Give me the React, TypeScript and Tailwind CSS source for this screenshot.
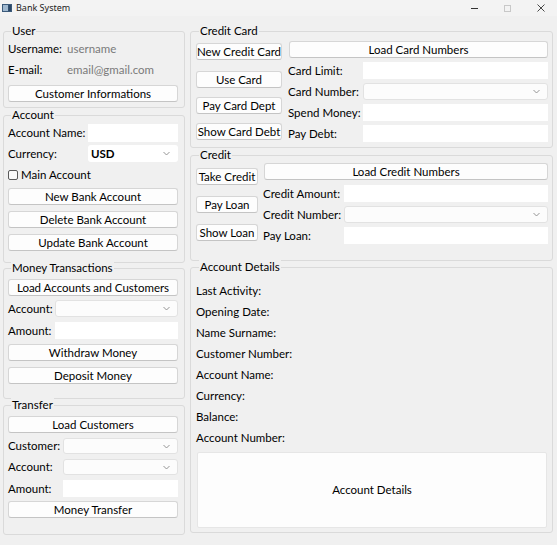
import React from "react";

const Btn = ({ children, className = "" }: { children: React.ReactNode; className?: string }) => (
  <div
    className={
      "flex items-center justify-center bg-[#fdfdfd] border border-[#d6d6d6] border-b-[#c4c4c4] rounded-[3px] text-black whitespace-nowrap " +
      className
    }
  >
    {children}
  </div>
);

const Input = ({ className = "" }: { className?: string }) => <div className={"bg-white " + className} />;

const Chevron = () => (
  <svg width="7" height="5" viewBox="0 0 7 5" className="shrink-0">
    <path d="M0.5 1 L3.5 4 L6.5 1" fill="none" stroke="#8a8a8a" strokeWidth="0.9" />
  </svg>
);

const Select = ({ className = "", value }: { className?: string; value?: string }) => (
  <div
    className={
      "flex items-center justify-between bg-[#fcfcfc] border border-[#e2e2e2] rounded-[3px] pl-[2px] pr-[7px] " + className
    }
  >
    <span className="font-bold">{value ?? ""}</span>
    <Chevron />
  </div>
);

const Label = ({ children, className = "" }: { children: React.ReactNode; className?: string }) => (
  <span className={"whitespace-nowrap shrink-0 " + className}>{children}</span>
);

const Group = ({
  title,
  className = "",
  children,
}: {
  title: string;
  className?: string;
  children?: React.ReactNode;
}) => (
  <div className={"flex flex-col border border-[#dadada] rounded-[3px] " + className}>
    <div className="-mt-[8px] ml-[3px] px-[1px] bg-[#f0f0f0] w-fit h-[14px] leading-[14px] whitespace-nowrap">{title}</div>
    {children}
  </div>
);

export default function App() {
  return (
    <div
      className="w-[557px] h-[545px] bg-[#f0f0f0] text-[11.5px] text-black overflow-hidden flex flex-col"
      style={{ fontFamily: 'Lato, "Noto Sans", sans-serif' }}
    >
      {/* title bar */}
      <div className="h-[16px] bg-[#f3f3f3] flex items-center shrink-0">
        <svg width="10" height="8" viewBox="0 0 10 8" className="ml-[2px]">
          <rect x="0" y="0" width="10" height="8" fill="#3b5a7a" />
          <rect x="1" y="1" width="5" height="6" fill="#9fb8cf" />
          <rect x="6.5" y="1" width="2.5" height="6" fill="#2a4766" />
        </svg>
        <span className="ml-[4px] text-[9px] leading-[10px] text-[#222]" style={{ fontFamily: '"Noto Sans", sans-serif' }}>
          Bank System
        </span>
        <div className="ml-auto flex items-center h-full">
          <div className="w-[33px] flex justify-center">
            <div className="w-[7px] h-[1px] bg-[#333]" />
          </div>
          <div className="w-[33px] flex justify-center">
            <div className="w-[7px] h-[7px] border border-[#c8c8c8]" />
          </div>
          <div className="w-[33px] flex justify-center">
            <svg width="8" height="8" viewBox="0 0 8 8">
              <path d="M0.5 0.5 L7.5 7.5 M7.5 0.5 L0.5 7.5" stroke="#333" strokeWidth="0.9" />
            </svg>
          </div>
        </div>
      </div>

      <div className="flex flex-row pl-[3px] pt-[15px]">
        {/* LEFT COLUMN */}
        <div className="w-[182px] flex flex-col">
          <Group title="User" className="h-[77px] pl-[4px] pr-[6px]">
            <div className="flex items-center h-[20px] mt-[1px]">
              <Label className="w-[59px]">Username:</Label>
              <span className="text-[#7a7a7a]">username</span>
            </div>
            <div className="flex items-center h-[20px] mt-[1px]">
              <Label className="w-[59px]">E-mail:</Label>
              <span className="text-[#7a7a7a]">email@gmail.com</span>
            </div>
            <Btn className="h-[17px] mt-[5px]">Customer Informations</Btn>
          </Group>

          <Group title="Account" className="h-[148px] mt-[7px] pl-[4px] pr-[6px]">
            <div className="flex items-center h-[18px] mt-[2px]">
              <Label className="w-[80px]">Account Name:</Label>
              <Input className="flex-1 h-[18px]" />
            </div>
            <div className="flex items-center h-[17px] mt-[3px]">
              <Label className="w-[80px]">Currency:</Label>
              <Select className="flex-1 h-[17px] bg-white border-transparent" value="USD" />
            </div>
            <div className="flex items-center h-[16px] mt-[5px]">
              <div className="w-[10px] h-[10px] border border-[#5a5a5a] rounded-[2px] bg-[#fafafa]" />
              <span className="ml-[3px]">Main Account</span>
            </div>
            <Btn className="h-[17px] mt-[5px]">New Bank Account</Btn>
            <Btn className="h-[17px] mt-[6px]">Delete Bank Account</Btn>
            <Btn className="h-[17px] mt-[6px]">Update Bank Account</Btn>
          </Group>

          <Group title="Money Transactions" className="h-[131px] mt-[5px] pl-[4px] pr-[6px]">
            <Btn className="h-[17px] mt-[4px]">Load Accounts and Customers</Btn>
            <div className="flex items-center h-[17px] mt-[4px]">
              <Label className="w-[47px]">Account:</Label>
              <Select className="flex-1 h-[17px]" />
            </div>
            <div className="flex items-center h-[17px] mt-[5px]">
              <Label className="w-[47px]">Amount:</Label>
              <Input className="flex-1 h-[17px]" />
            </div>
            <Btn className="h-[17px] mt-[5px]">Withdraw Money</Btn>
            <Btn className="h-[17px] mt-[6px]">Deposit Money</Btn>
          </Group>

          <Group title="Transfer" className="h-[130px] mt-[6px] pl-[4px] pr-[6px]">
            <Btn className="h-[17px] mt-[4px]">Load Customers</Btn>
            <div className="flex items-center h-[16px] mt-[5px]">
              <Label className="w-[55px]">Customer:</Label>
              <Select className="flex-1 h-[16px]" />
            </div>
            <div className="flex items-center h-[16px] mt-[5px]">
              <Label className="w-[55px]">Account:</Label>
              <Select className="flex-1 h-[16px]" />
            </div>
            <div className="flex items-center h-[17px] mt-[5px]">
              <Label className="w-[55px]">Amount:</Label>
              <Input className="flex-1 h-[17px]" />
            </div>
            <Btn className="h-[17px] mt-[4px]">Money Transfer</Btn>
          </Group>
        </div>

        {/* RIGHT COLUMN */}
        <div className="w-[363px] ml-[5px] flex flex-col">
          <Group title="Credit Card" className="h-[117px] pl-[5px] pr-[4px]">
            <div className="flex flex-row mt-[3px]">
              <div className="w-[86px] flex flex-col">
                <Btn className="h-[17px] mt-[2px]">New Credit Card</Btn>
                <Btn className="h-[17px] mt-[11px]">Use Card</Btn>
                <Btn className="h-[17px] mt-[9px]">Pay Card Dept</Btn>
                <Btn className="h-[17px] mt-[9px]">Show Card Debt</Btn>
              </div>
              <div className="flex-1 flex flex-col ml-[6px]">
                <Btn className="h-[17px] ml-[1px]">Load Card Numbers</Btn>
                <div className="flex items-center h-[17px] mt-[4px]">
                  <Label className="w-[75px]">Card Limit:</Label>
                  <Input className="flex-1 h-[17px]" />
                </div>
                <div className="flex items-center h-[17px] mt-[4px]">
                  <Label className="w-[75px]">Card Number:</Label>
                  <Select className="flex-1 h-[17px]" />
                </div>
                <div className="flex items-center h-[17px] mt-[4px]">
                  <Label className="w-[75px]">Spend Money:</Label>
                  <Input className="flex-1 h-[17px]" />
                </div>
                <div className="flex items-center h-[17px] mt-[4px]">
                  <Label className="w-[75px]">Pay Debt:</Label>
                  <Input className="flex-1 h-[17px]" />
                </div>
              </div>
            </div>
          </Group>

          <Group title="Credit" className="h-[106px] mt-[7px] pl-[5px] pr-[4px]">
            <div className="flex flex-row mt-[1px]">
              <div className="w-[62px] flex flex-col">
                <Btn className="h-[17px] mt-[5px]">Take Credit</Btn>
                <Btn className="h-[17px] mt-[11px]">Pay Loan</Btn>
                <Btn className="h-[17px] mt-[11px]">Show Loan</Btn>
              </div>
              <div className="flex-1 flex flex-col ml-[5px]">
                <Btn className="h-[17px] ml-[1px]">Load Credit Numbers</Btn>
                <div className="flex items-center h-[17px] mt-[5px]">
                  <Label className="w-[81px]">Credit Amount:</Label>
                  <Input className="flex-1 h-[17px]" />
                </div>
                <div className="flex items-center h-[17px] mt-[4px]">
                  <Label className="w-[81px]">Credit Number:</Label>
                  <Select className="flex-1 h-[17px]" />
                </div>
                <div className="flex items-center h-[17px] mt-[4px]">
                  <Label className="w-[81px]">Pay Loan:</Label>
                  <Input className="flex-1 h-[17px]" />
                </div>
              </div>
            </div>
          </Group>

          <Group title="Account Details" className="h-[266px] mt-[6px] pl-[5px] pr-[5px]">
            <div className="flex flex-col mt-[6px]">
              {[
                "Last Activity:",
                "Opening Date:",
                "Name Surname:",
                "Customer Number:",
                "Account Name:",
                "Currency:",
                "Balance:",
                "Account Number:",
              ].map((t) => (
                <div key={t} className="h-[21px] flex items-center whitespace-nowrap">
                  {t}
                </div>
              ))}
            </div>
            <div className="ml-[1px] mt-[4px] h-[76px] bg-[#fdfdfd] border border-[#e6e6e6] rounded-[2px] flex items-center justify-center">
              Account Details
            </div>
          </Group>
        </div>
      </div>
    </div>
  );
}
